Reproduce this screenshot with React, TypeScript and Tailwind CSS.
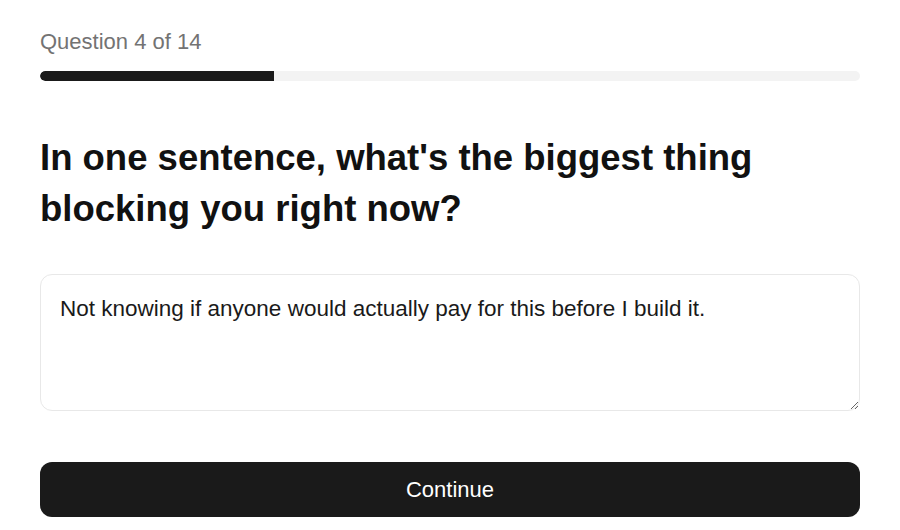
import React, { useState } from 'react';

const TOTAL = 14;
const CURRENT = 4;

const App: React.FC = () => {
  const [answer, setAnswer] = useState(
    'Not knowing if anyone would actually pay for this before I build it.'
  );
  const progress = (CURRENT / TOTAL) * 100;

  return (
    <div className="min-h-screen bg-white px-10 pt-7 font-['Liberation_Sans',Arial,sans-serif]">
      <p className="text-[22px] leading-[28px] text-[#737373]">
        Question {CURRENT} of {TOTAL}
      </p>

      <div className="mt-[15px] h-[10px] w-full overflow-hidden rounded-full bg-[#f3f3f3]">
        <div className="h-full rounded-l-full bg-[#1a1a1a]" style={{ width: `${progress}%` }} />
      </div>

      <h1 className="mt-[51px] text-[36.5px] font-bold leading-[51px] text-[#111111]">
        In one sentence, what's the biggest thing
        <br />
        blocking you right now?
      </h1>

      <textarea
        value={answer}
        onChange={(e) => setAnswer(e.target.value)}
        className="mt-10 block h-[137px] w-full rounded-xl border border-[#e8e8e8] bg-white px-[19px] py-[18px] text-[22.5px] leading-[31.5px] text-[#1a1a1a] outline-none"
      />

      <button className="mt-[51px] flex h-[55px] w-full items-center justify-center rounded-xl bg-[#1a1a1a] text-[22px] text-white">
        Continue
      </button>
    </div>
  );
};

export default App;
